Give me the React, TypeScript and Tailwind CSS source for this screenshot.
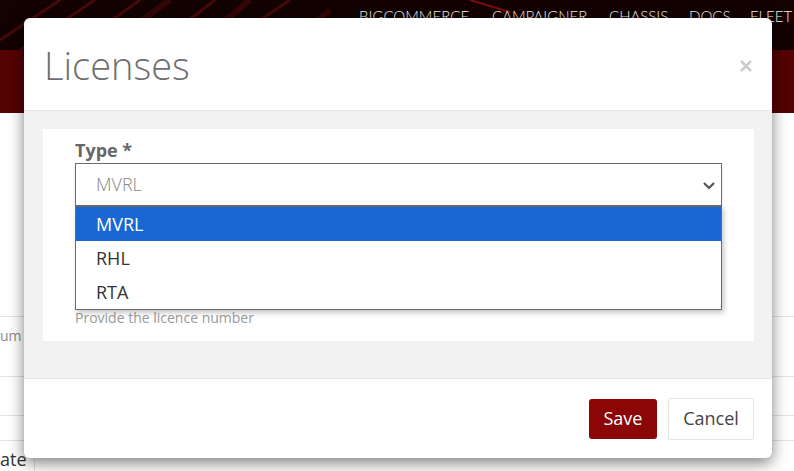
import { useState } from "react";

const navItems = [
  { label: "BIGCOMMERCE", w: "w-[133px]" },
  { label: "CAMPAIGNER", w: "w-[117px]" },
  { label: "CHASSIS", w: "w-[80px]" },
  { label: "DOCS", w: "w-[61px]" },
  { label: "FLEET", w: "w-[60px]" },
];

const types = ["MVRL", "RHL", "RTA"];

export default function App() {
  const [selected] = useState("MVRL");

  return (
    <div className="relative w-[794px] h-[471px] overflow-hidden bg-white font-['Open_Sans',sans-serif]">
      {/* page behind the modal */}
      <header className="relative h-[50px] overflow-hidden bg-[#130202]">
        <svg className="absolute inset-0" width="794" height="50" viewBox="0 0 794 50">
          <g stroke="#5e0b0b" strokeWidth="3" opacity="0.7">
            <line x1="0" y1="40" x2="60" y2="0" />
            <line x1="20" y1="50" x2="95" y2="0" />
            <line x1="70" y1="50" x2="140" y2="0" />
            <line x1="150" y1="50" x2="215" y2="0" />
            <line x1="230" y1="40" x2="290" y2="0" />
          </g>
          <g stroke="#3d0606" strokeWidth="6" opacity="0.8">
            <line x1="100" y1="50" x2="170" y2="0" />
            <line x1="190" y1="50" x2="250" y2="0" />
            <line x1="280" y1="50" x2="330" y2="10" />
          </g>
          <line x1="470" y1="0" x2="510" y2="12" stroke="#7a0c0c" strokeWidth="2" />
        </svg>
        <nav className="relative flex pl-[359px] pt-[7px] font-['Lato',sans-serif] font-light text-[15px] leading-[18px] text-[#f4f0ea]">
          {navItems.map((n) => (
            <span key={n.label} className={`${n.w} shrink-0 whitespace-nowrap`}>
              {n.label}
            </span>
          ))}
        </nav>
      </header>
      <div className="h-[63px] bg-[#540202]" />
      <div className="flex flex-col">
        <div className="h-[204px] border-b border-[#e3e3e3]" />
        <div className="h-[60px] border-b border-[#e3e3e3] flex items-start pt-[9px]">
          <span className="text-[14px] text-[#8a8a8a] leading-[20px]">um</span>
        </div>
        <div className="h-[39px] border-b border-[#e3e3e3]" />
        <div className="h-[25px] border-b border-[#e3e3e3]" />
        <div className="h-[30px] flex">
          <div className="w-[35px] border-r border-[#e3e3e3] flex items-end">
            <span className="text-[18px] text-[#333] leading-[24px]">ate</span>
          </div>
        </div>
      </div>

      {/* modal */}
      <div className="absolute left-[24px] top-[18px] w-[748px] h-[440px] bg-white rounded-[6px] shadow-[0_5px_15px_rgba(0,0,0,0.5)] flex flex-col overflow-hidden">
        <div className="h-[93px] flex items-center justify-between pl-[20px] pr-[20px] border-b border-[#e5e5e5]">
          <h1 className="text-[38px] leading-[44px] font-light text-[#6f6f6f] mt-[2px]">Licenses</h1>
          <svg width="12" height="12" viewBox="0 0 12 12" className="mt-[4px]">
            <path d="M1 1 L11 11 M11 1 L1 11" stroke="#cccccc" strokeWidth="2.6" />
          </svg>
        </div>

        <div className="bg-[#f2f2f2] pt-[18px] pl-[19px] pr-[18px] pb-[37px] border-b border-[#e5e5e5]">
          <div className="bg-white px-[32px] pt-[9px] pb-[13px]">
            <label className="block text-[18px] leading-[25px] font-bold text-[#666]">Type *</label>
            <div className="relative">
              <div className="h-[43px] border border-[#6b6b6b] flex items-center justify-between pl-[20px] pr-[5px] shadow-[0_2px_3px_rgba(0,0,0,0.12)]">
                <span className="text-[18px] font-light text-[#888]">{selected}</span>
                <svg width="14" height="10" viewBox="0 0 14 10">
                  <path d="M2 3 L7 8 L12 3" fill="none" stroke="#555" strokeWidth="2.2" />
                </svg>
              </div>
              <ul className="absolute left-0 right-0 top-[43px] z-10 bg-white border border-[#6b6b6b] shadow-[2px_3px_5px_rgba(0,0,0,0.22)]">
                {types.map((t) => (
                  <li
                    key={t}
                    className={
                      t === selected
                        ? "h-[34px] flex items-center pl-[20px] text-[18px] bg-[#1967d2] text-white"
                        : "h-[34px] flex items-center pl-[20px] text-[18px] text-[#333]"
                    }
                  >
                    {t}
                  </li>
                ))}
              </ul>
            </div>
            {/* number field sits under the open list */}
            <div className="mt-[44px] h-[43px] border border-[#ccc]" />
            <p className="mt-[15px] text-[14px] leading-[20px] text-[#9a9a9a]">Provide the licence number</p>
          </div>
        </div>

        <div className="flex-1 flex items-center justify-end gap-[11px] pr-[18px]">
          <button className="w-[68px] h-[40px] rounded-[3px] bg-[#8b0707] text-white text-[18px]">Save</button>
          <button className="w-[86px] h-[42px] rounded-[2px] border border-[#e5e5e5] bg-white text-[#444] text-[18px]">
            Cancel
          </button>
        </div>
      </div>
    </div>
  );
}
